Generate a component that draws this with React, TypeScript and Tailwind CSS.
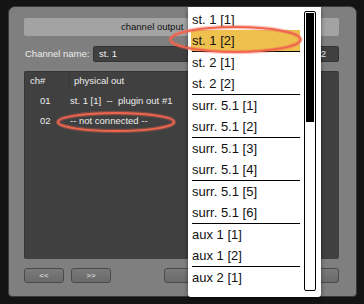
import React from "react";

const groups = [
  ["st. 1 [1]", "st. 1 [2]"],
  ["st. 2 [1]", "st. 2 [2]"],
  ["surr. 5.1 [1]", "surr. 5.1 [2]"],
  ["surr. 5.1 [3]", "surr. 5.1 [4]"],
  ["surr. 5.1 [5]", "surr. 5.1 [6]"],
  ["aux 1 [1]", "aux 1 [2]"],
  ["aux 2 [1]"],
];

const rows = [
  { ch: "01", out: "st. 1 [1]  --  plugin out #1" },
  { ch: "02", out: "-- not connected --" },
];

function Btn({ label, className }: { label?: string; className: string }) {
  return (
    <button
      className={`h-[15px] rounded-[3px] border border-[#4a4a4a] bg-gradient-to-b from-[#7a7a7a] to-[#6a6a6a] text-[8px] leading-none text-[#f0f0f0] ${className}`}>
      {label}
    </button>
  );
}

export default function App() {
  return (
    <div
      className="relative h-[304px] w-[364px] overflow-hidden bg-[#141414] pl-[8px] pt-[6px]"
      style={{ fontFamily: '"Liberation Sans", Arial, sans-serif' }}>
      {/* dialog */}
      <div className="flex h-[291px] w-[349px] flex-col rounded-t-[7px] rounded-b-[4px] border border-[#3a3a3a] bg-[#7f7f7f] pl-[15px] pr-[17px] pt-[11px]">
        <div className="flex h-[18px] items-center rounded-[2px] bg-[#a3a3a3] pl-[97px] text-[9.5px] text-[#111]">
          <span>channel output</span>
        </div>

        <div className="mt-[10px] flex h-[16px] items-center">
          <span className="w-[69px] pl-[1px] text-[9.5px] text-[#ececec]">Channel name:</span>
          <div className="flex h-[16px] flex-1 items-center justify-between rounded-[2px] border border-[#333] bg-[#404040] px-[5px] text-[9.5px] text-[#f2f2f2]">
            <span>st. 1</span>
            <span className="pr-[7px]">2</span>
          </div>
        </div>

        <div className="mt-[9px] h-[188px] rounded-[2px] border-l border-t border-[#363636] bg-[#404040] text-[9.5px] text-[#ececec]">
          <div className="flex h-[19px] items-center">
            <div className="flex h-full w-[44px] items-center pl-[5px]">ch#</div>
            <div className="flex h-full flex-1 items-center border-l border-[#383838] pl-[4px]">physical out</div>
          </div>
          {rows.map((r) => (
            <div key={r.ch} className="flex h-[20px] items-center">
              <div className="w-[45px] pl-[15px]">{r.ch}</div>
              <div className="whitespace-pre">{r.out}</div>
            </div>
          ))}
        </div>

        <div className="mt-[9px] flex">
          <Btn label="<<" className="w-[40px]" />
          <Btn label=">>" className="ml-[7px] w-[40px]" />
          <Btn className="ml-[53px] w-[66px]" />
          <Btn className="ml-auto w-[66px]" />
        </div>
      </div>

      {/* popup menu */}
      <div className="absolute left-[188px] top-[7px] flex h-[290px] w-[133px] rounded-b-[3px] bg-white pl-[3px] pt-[2px] shadow-[0_2px_4px_rgba(0,0,0,0.5)]">
        <div className="w-[109px] text-[13px] text-[#111]">
          {groups.map((g, gi) => (
            <div key={gi}>
              {g.map((item) => (
                <div
                  key={item}
                  className={`h-[21px] pl-[1px] leading-[21px] ${item === "st. 1 [2]" ? "bg-[#eec14f]" : ""}`}>
                  {item}
                </div>
              ))}
              {g.length === 2 && <div className="ml-[1px] h-px bg-black" />}
            </div>
          ))}
        </div>
        <div className="ml-[4px] mt-[2px] h-[280px] w-[12px] rounded-[2px] border border-black bg-white p-px">
          <div className="h-[109px] w-full bg-black" />
        </div>
      </div>

      {/* highlight marks */}
      <svg className="pointer-events-none absolute left-0 top-0" width="364" height="304">
        <g fill="none">
          <ellipse cx="235.5" cy="39.5" rx="65" ry="12.5" stroke="rgba(240,100,80,0.35)" strokeWidth="4.5" />
          <ellipse cx="235.5" cy="39.5" rx="65" ry="12.5" stroke="#ef654e" strokeWidth="2" />
          <ellipse cx="116" cy="122" rx="58" ry="9" stroke="rgba(240,100,80,0.35)" strokeWidth="4.5" />
          <ellipse cx="116" cy="122" rx="58" ry="9" stroke="#ef654e" strokeWidth="2" />
        </g>
      </svg>
    </div>
  );
}
